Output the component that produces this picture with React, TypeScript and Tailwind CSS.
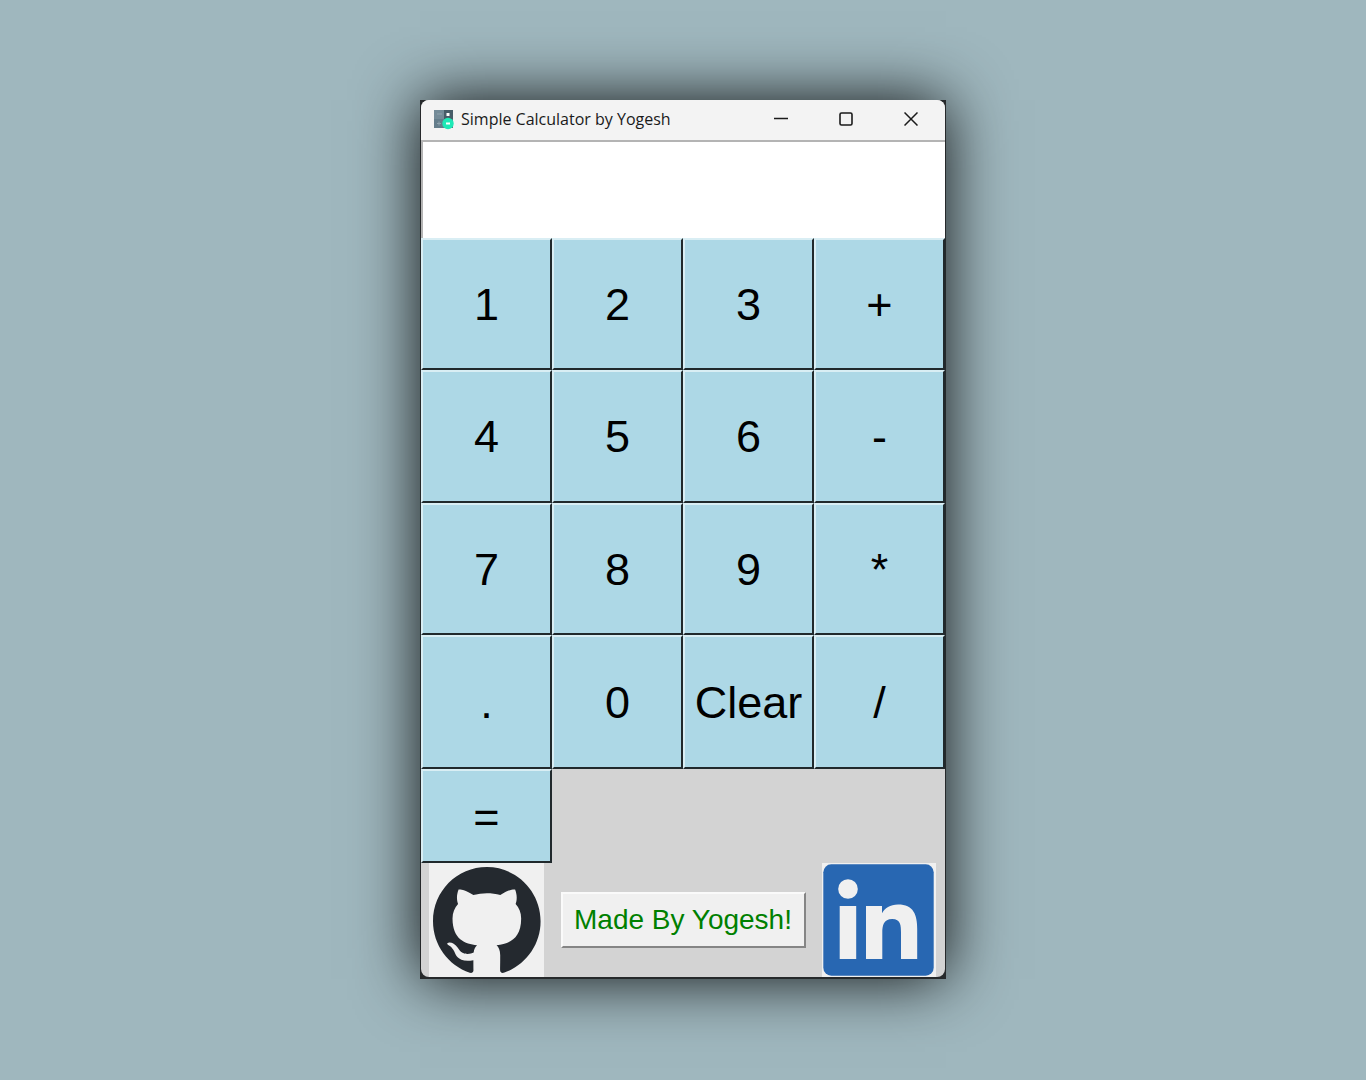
import React, { useState } from "react";

const KEYS = ["1", "2", "3", "+", "4", "5", "6", "-", "7", "8", "9", "*", ".", "0", "Clear", "/", "="];

function AppIcon() {
  return (
    <svg width="20" height="20" viewBox="0 0 20 20" aria-hidden="true">
      <rect width="10" height="10" fill="#748b98" />
      <rect x="10" width="9" height="10" fill="#475c68" />
      <rect y="9" width="10" height="9" fill="#647d8b" />
      <rect x="10" y="9" width="9" height="9" fill="#566f7c" />
      <path d="M3 4h5M3 13.500h4M5 11.500v4" stroke="#8fa2ad" strokeWidth="1" />
      <rect x="12.500" y="3" width="3" height="3" fill="#fff" />
      <circle cx="14" cy="13.500" r="5.700" fill="#1de9b6" />
      <rect x="12" y="12.500" width="4" height="2" fill="#fff" />
    </svg>
  );
}

function GithubMark() {
  return (
    <svg width="108" height="106" viewBox="0 0 98 96" aria-hidden="true">
      <path
        fill="#24292f"
        fillRule="evenodd"
        d="M48.854 0C21.839 0 0 22 0 49.217c0 21.756 13.993 40.172 33.405 46.69 2.427.49 3.316-1.059 3.316-2.362 0-1.141-.08-5.052-.08-9.127-13.59 2.934-16.42-5.867-16.42-5.867-2.184-5.704-5.42-7.17-5.42-7.17-4.448-3.015.324-3.015.324-3.015 4.934.326 7.523 5.052 7.523 5.052 4.367 7.496 11.404 5.378 14.235 4.074.404-3.178 1.699-5.378 3.074-6.6-10.839-1.141-22.243-5.378-22.243-24.283 0-5.378 1.94-9.778 5.014-13.2-.485-1.222-2.184-6.275.486-13.038 0 0 4.125-1.304 13.426 5.052a46.97 46.97 0 0 1 12.214-1.63c4.125 0 8.33.571 12.213 1.63 9.302-6.356 13.427-5.052 13.427-5.052 2.67 6.763.97 11.816.485 13.038 3.155 3.422 5.015 7.822 5.015 13.2 0 18.905-11.404 23.06-22.324 24.283 1.78 1.548 3.316 4.481 3.316 9.126 0 6.6-.08 11.897-.08 13.526 0 1.304.89 2.853 3.316 2.364 19.412-6.52 33.405-24.935 33.405-46.691C97.707 22 75.788 0 48.854 0z"
      />
    </svg>
  );
}

function LinkedinMark() {
  return (
    <svg width="114" height="114" viewBox="0 0 114 114" aria-hidden="true">
      <rect x="1.300" y="1.300" width="110.400" height="111.400" rx="8" fill="#2867b2" />
      <g fill="#f0f0f0">
        <circle cx="26" cy="26" r="9.800" />
        <path d="M17.700 43H34.200V96H17.700z" />
        <path d="M44 43H60V50.200C62.600 45.400 68.200 41.500 76 41.500C91.500 41.500 95.200 51.700 95.200 66V96H79V69.500C79 63 78.800 56 70.200 56C61.500 56 60.300 63 60.300 69.500V96H44z" />
      </g>
    </svg>
  );
}

const control = "flex w-[65px] items-center justify-center hover:bg-black/5";

export default function App() {
  const [value, setValue] = useState("");

  const press = (key: string) => {
    if (key === "Clear") return setValue("");
    if (key !== "=") return setValue(value + key);
    try {
      setValue(/^[\d.+\-*/]+$/.test(value) ? String(Function(`return ${value}`)()) : "");
    } catch {
      setValue("Error");
    }
  };

  return (
    <div className="flex min-h-screen justify-center bg-[#9fb7be] py-[100px] font-['Liberation_Sans',Arial,sans-serif]">
      <main className="w-full max-w-[526px] self-start bg-[#26292b] px-px pb-[2px] shadow-[0_0_60px_rgba(0,0,0,0.92)]">
        <div className="overflow-hidden rounded-lg bg-[#d3d3d3]">
          <header className="flex h-10 justify-between bg-[#f3f3f3] pl-[13px]">
            <div className="flex items-center gap-[7px]">
              <AppIcon />
              <h1 className="pb-[2px] font-['Open_Sans','Noto_Sans',sans-serif] text-base text-[#1a1a1a]">
                Simple Calculator by Yogesh
              </h1>
            </div>
            <div className="flex pb-[2px] pr-[2px]">
              <button aria-label="Minimize" className={control}>
                <svg width="14" height="14" viewBox="0 0 14 14" stroke="#1a1a1a" strokeWidth="1.300">
                  <path d="M0 6.500h14" />
                </svg>
              </button>
              <button aria-label="Maximize" className={control}>
                <svg width="14" height="14" viewBox="0 0 14 14" fill="none" stroke="#1a1a1a" strokeWidth="1.600">
                  <rect x="1" y="1" width="12" height="12" rx="1.500" />
                </svg>
              </button>
              <button aria-label="Close" className={control}>
                <svg width="14" height="14" viewBox="0 0 14 14" stroke="#1a1a1a" strokeWidth="1.500">
                  <path d="M.5.5l13 13M13.500.5l-13 13" />
                </svg>
              </button>
            </div>
          </header>

          <input
            aria-label="Display"
            value={value}
            onChange={(e) => setValue(e.target.value)}
            className="block h-[98px] w-full border-l-2 border-t-2 border-l-[#b4b4b4] border-t-[#b4b4b4] bg-white px-2 text-[45px] outline-none"
          />

          <div className="grid grid-cols-4 grid-rows-[132px_133px_132px_134px_94px]">
            {KEYS.map((key) => (
              <button
                key={key}
                onClick={() => press(key)}
                className="border-b-2 border-l-2 border-r-2 border-t-2 border-b-[#20292c] border-l-[#d9eef4] border-r-[#20292c] border-t-[#d9eef4] bg-[#add8e6] text-[45px] leading-none text-black"
              >
                {key}
              </button>
            ))}
          </div>

          <footer className="flex items-center justify-between pl-2 pr-[9px]">
            <a href="#github" aria-label="GitHub" className="flex h-[114px] w-[115px] items-center justify-center bg-[#f0f0f0]">
              <GithubMark />
            </a>
            <button className="h-14 w-[245px] border-2 border-b-[#858585] border-l-[#fafafa] border-r-[#858585] border-t-[#fafafa] bg-[#f0f0f0] text-[28px] leading-none text-[#008000]">
              Made By Yogesh!
            </button>
            <a href="#linkedin" aria-label="LinkedIn" className="bg-[#f0f0f0]">
              <LinkedinMark />
            </a>
          </footer>
        </div>
      </main>
    </div>
  );
}
